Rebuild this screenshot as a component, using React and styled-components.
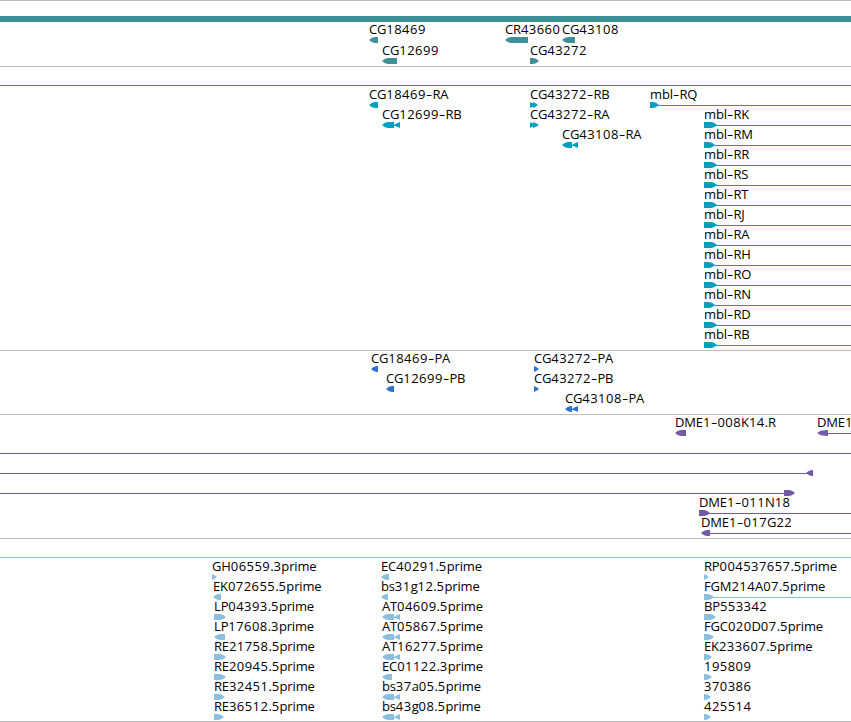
import React from "react";
import styled, { createGlobalStyle } from "styled-components";

const EDGE = 851;

// glyph: [direction, start, end]; line: [start, end]
const right = (name, start, end, line) => ({
  name,
  x: start,
  glyphs: [["R", start, end]],
  line: line ? [end - 2, EDGE] : null,
});

const left = (name, start, end, line) => ({
  name,
  x: start,
  glyphs: [["L", start, end]],
  line: line ? [end, EDGE] : null,
});

const spliced = (name, start, mid, end) => ({
  name,
  x: start,
  glyphs: [
    ["L", start, mid],
    ["L", end - 6, end],
  ],
  line: [mid, end - 4],
});

const span = (start, end, glyphs = []) => ({
  x: start,
  glyphs,
  line: [start, end],
});

const tracks = [
  {
    id: "gene",
    color: "#3f8f96",
    rowHeight: 21,
    padBottom: 1,
    rows: [
      [{ x: 0, glyphs: [["B", 0, EDGE]] }],
      [
        left("CG18469", 369, 378),
        left("CR43660", 505, 528),
        left("CG43108", 562, 575),
      ],
      [left("CG12699", 382, 397), right("CG43272", 530, 539)],
    ],
  },
  {
    id: "transcript",
    color: "#009fbf",
    rows: [
      [span(0, EDGE)],
      [
        left("CG18469-RA", 369, 378),
        {
          name: "CG43272-RB",
          x: 530,
          glyphs: [
            ["R", 530, 535],
            ["R", 533, 538],
          ],
        },
        right("mbl-RQ", 650, 659, true),
      ],
      [
        spliced("CG12699-RB", 382, 394, 400),
        {
          name: "CG43272-RA",
          x: 530,
          glyphs: [
            ["R", 530, 535],
            ["R", 533, 539],
          ],
        },
        right("mbl-RK", 704, 717, true),
      ],
      [
        spliced("CG43108-RA", 562, 572, 578),
        right("mbl-RM", 704, 715, true),
      ],
      [right("mbl-RR", 704, 717, true)],
      [right("mbl-RS", 704, 717, true)],
      [right("mbl-RT", 704, 717, true)],
      [right("mbl-RJ", 704, 717, true)],
      [right("mbl-RA", 704, 717, true)],
      [right("mbl-RH", 704, 715, true)],
      [right("mbl-RO", 704, 717, true)],
      [right("mbl-RN", 704, 715, true)],
      [right("mbl-RD", 704, 717, true)],
      [right("mbl-RB", 704, 717, true)],
    ],
  },
  {
    id: "protein",
    color: "#3070d0",
    rows: [
      [left("CG18469-PA", 371, 378), right("CG43272-PA", 534, 539)],
      [left("CG12699-PB", 386, 394), right("CG43272-PB", 534, 539)],
      [spliced("CG43108-PA", 565, 572, 578)],
    ],
  },
  {
    id: "clone",
    color: "#7459a6",
    rows: [
      [
        left("DME1-008K14.R", 675, 686),
        {
          name: "DME1",
          x: 817,
          glyphs: [
            ["L", 817, 823],
            ["L", 820, 828],
          ],
          line: [828, EDGE],
        },
      ],
      [span(0, EDGE)],
      [span(0, 808, [["L", 806, 813]])],
      [span(0, 785, [["R", 784, 795]])],
      [right("DME1-011N18", 699, 710, true)],
      [left("DME1-017G22", 701, 710, true)],
    ],
  },
  {
    id: "est",
    color: "#8bbfdf",
    padBottom: 1,
    rows: [
      [span(0, EDGE)],
      [
        right("GH06559.3prime", 212, 217),
        left("EC40291.5prime", 381, 389),
        right("RP004537657.5prime", 704, 709),
      ],
      [
        left("EK072655.5prime", 213, 221),
        left("bs31g12.5prime", 381, 388),
        right("FGM214A07.5prime", 704, 714, true),
      ],
      [
        right("LP04393.5prime", 214, 226),
        spliced("AT04609.5prime", 382, 394, 400),
        right("BP553342", 704, 716),
      ],
      [
        left("LP17608.3prime", 214, 225),
        spliced("AT05867.5prime", 382, 394, 400),
        right("FGC020D07.5prime", 704, 714),
      ],
      [
        right("RE21758.5prime", 214, 226),
        spliced("AT16277.5prime", 382, 394, 400),
        right("EK233607.5prime", 704, 712),
      ],
      [
        right("RE20945.5prime", 214, 226),
        left("EC01122.3prime", 382, 392),
        right("195809", 704, 712),
      ],
      [
        right("RE32451.5prime", 214, 225),
        spliced("bs37a05.5prime", 382, 394, 400),
        right("370386", 704, 711),
      ],
      [
        right("RE36512.5prime", 214, 224),
        spliced("bs43g08.5prime", 382, 394, 400),
        right("425514", 704, 711),
      ],
    ],
  },
];

function glyphPoints([dir, start, end], origin) {
  const a = start - origin;
  const b = end - origin;
  if (dir === "B") return `${a},0 ${b},0 ${b},6 ${a},6`;
  // short features are plain triangles, longer ones get a rounded nose
  const width = b - a;
  const head = Math.min(width, 6);
  const y = width < 7 ? 1.2 : 0.7;
  const half = head / 2;
  if (dir === "R") {
    return `${a},0 ${b - head},0 ${b - half},${y} ${b},3 ${b - half},${6 - y} ${b - head},6 ${a},6`;
  }
  return `${b},0 ${a + head},0 ${a + half},${y} ${a},3 ${a + half},${6 - y} ${a + head},6 ${b},6`;
}

function FeatureName({ name = "" }) {
  const parts = name.match(/\d+|-|[^\d-]+/g) || [];

  return (
    <Label>
      {parts.map((part, index) => {
        if (part === "-") return <Dash key={index}>-</Dash>;
        if (/\d/.test(part)) return <Digits key={index}>{part}</Digits>;
        return part;
      })}
    </Label>
  );
}

function Feature({ feature, color }) {
  const { name, x, glyphs, line } = feature;
  const end = Math.max(line ? line[1] : 0, ...glyphs.map((g) => g[2]));

  return (
    <FeatureBox $x={x}>
      <FeatureName name={name} />
      <Glyph width={end - x} height="6" fill={color}>
        {line && (
          <rect x={line[0] - x} y="3" width={line[1] - line[0]} height="1" />
        )}
        {glyphs.map((g) => (
          <polygon key={g[1]} points={glyphPoints(g, x)} />
        ))}
      </Glyph>
    </FeatureBox>
  );
}

export default function App() {
  return (
    <>
      <GlobalStyle />
      <Browser>
        {tracks.map((track) => (
          <Track key={track.id} $padBottom={track.padBottom}>
            {track.rows.map((row, index) => (
              <Row key={index} $height={track.rowHeight}>
                {row.map((feature) => (
                  <Feature
                    key={feature.x}
                    feature={feature}
                    color={track.color}
                  />
                ))}
              </Row>
            ))}
          </Track>
        ))}
      </Browser>
    </>
  );
}

/* ==================== STYLED COMPONENTS ==================== */

const GlobalStyle = createGlobalStyle`
  body {
    margin: 0;
    background: #fff;
    overflow: hidden;
  }
`;

const Browser = styled.main`
  width: 851px;
  height: 722px;
  box-sizing: border-box;
  border-bottom: 1px solid #bebebe;
  overflow: hidden;
  color: #000;
  font-family: "Open Sans", "Noto Sans", sans-serif;
  font-size: 13px;
  letter-spacing: -0.15px;
`;

const Track = styled.section`
  border-top: 1px solid #bebebe;
  padding: 1px 0 ${({ $padBottom = 2 }) => $padBottom}px;
`;

/* every feature shares one cell and is pushed to its own start */
const Row = styled.div`
  display: grid;
  grid-template-columns: 851px;
  height: ${({ $height = 20 }) => $height}px;
`;

const FeatureBox = styled.div`
  grid-area: 1 / 1;
  margin-left: ${({ $x }) => $x}px;
  display: flex;
  flex-direction: column;
  align-items: flex-start;
  height: 20px;
`;

const Label = styled.span`
  height: 14px;
  line-height: 13px;
  white-space: nowrap;
`;

const Digits = styled.span`
  letter-spacing: 0.45px;
`;

const Dash = styled.span`
  display: inline-block;
  margin: 0 1.3px;
  transform: scaleX(1.5);
`;

const Glyph = styled.svg`
  display: block;
  flex: none;
`;
